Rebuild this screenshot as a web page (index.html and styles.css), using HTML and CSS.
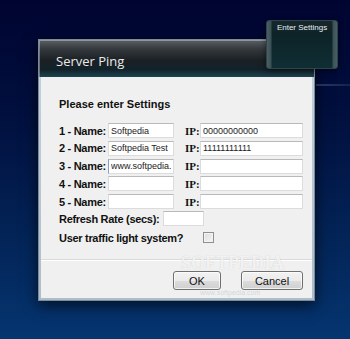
FILE: index.html
```html
<!DOCTYPE html>
<html lang="en">
<head>
  <meta charset="UTF-8">
  <title>Server Ping</title>
  <link rel="stylesheet" href="styles.css">
</head>
<body>

<div class="desk">
  <div class="dialog">
    <div class="titlebar">Server Ping</div>

    <div class="client">
      <form class="settings">
        <h1>Please enter Settings</h1>

        <div class="grid">
          <label>1 - Name:</label><input type="text" value="Softpedia"><label class="ip">IP:</label><input type="text" value="00000000000">
          <label>2 - Name:</label><input type="text" value="Softpedia Test"><label class="ip">IP:</label><input type="text" value="11111111111">
          <label>3 - Name:</label><input type="text" class="focus" value="www.softpedia.com"><label class="ip">IP:</label><input type="text">
          <label>4 - Name:</label><input type="text"><label class="ip">IP:</label><input type="text">
          <label>5 - Name:</label><input type="text"><label class="ip">IP:</label><input type="text">
        </div>

        <div class="line">
          <label class="rate-label">Refresh Rate (secs):</label>
          <input type="text" class="rate">
        </div>

        <div class="line check-line">
          <label class="check-label">User traffic light system?</label>
          <span class="check"></span>
        </div>
      </form>

      <div class="buttons">
        <button class="btn ok">OK</button>
        <button class="btn cancel">Cancel</button>
      </div>
    </div>
  </div>

  <!-- sidebar gadget sitting over the dialog corner -->
  <div class="gadget">Enter Settings</div>

  <div class="watermark">SOFTPEDIA</div>
  <div class="watermark-url">www.softpedia.com</div>
</div>

</body>
</html>
```

FILE: styles.css
```css
html, body {
  margin: 0;
  padding: 0;
}

body {
  width: 350px;
  height: 339px;
  overflow: hidden;
  font-family: 'Liberation Sans', Arial, sans-serif;
  background:
    linear-gradient(to right, rgba(120,150,200,.35), rgba(120,150,200,.15)) no-repeat 316px 84px / 34px 2px,
    linear-gradient(#000430 0%, #01103f 35%, #032457 70%, #053570 100%);
}

.desk {
  position: relative;
  height: 339px;
  box-sizing: border-box;
  padding: 39px 0 0 38px;
}

.dialog {
  width: 277px;
  box-sizing: border-box;
  border: 1px solid #7d8b98;
  background: linear-gradient(#c4d4de, #aebdca);
  box-shadow: 0 4px 14px rgba(0,0,0,.65);
}

.titlebar {
  height: 37px;
  box-sizing: border-box;
  padding: 13px 0 0 17px;
  color: #eaeaea;
  font-family: 'Open Sans', sans-serif;
  font-size: 13px;
  line-height: 16px;
  background: linear-gradient(#5b6065 0%, #33383c 25%, #1b2024 55%, #13222a 80%, #1d4452 100%);
  box-shadow: inset 1px 1px 0 rgba(255,255,255,.35);
}

.client {
  margin: 0 2px 2px;
  height: 221px;
  background: #f0f0f0;
  display: flex;
  flex-direction: column;
}

.settings {
  flex: 1;
  padding: 21px 0 0 18px;
}

h1 {
  margin: 0 0 12px;
  font-size: 11px;
  line-height: 13px;
  font-weight: bold;
  color: #111;
}

.grid {
  display: grid;
  grid-template-columns: 49px 66px 26px 103px;
  grid-auto-rows: 15px;
  row-gap: 2.75px;
  align-items: center;
}

label {
  font-size: 11px;
  font-weight: bold;
  letter-spacing: -0.3px;
  color: #111;
  white-space: nowrap;
}

.ip {
  padding-left: 11px;
  letter-spacing: 0;
  font-family: 'Liberation Serif', serif;
}

input[type=text] {
  height: 15px;
  box-sizing: border-box;
  margin: 0;
  padding: 0 2px;
  border: 1px solid #dcdcdc;
  border-top-color: #b9b9b9;
  background: #fff;
  font-family: 'Liberation Sans', sans-serif;
  font-size: 9px;
  color: #222;
  outline: none;
}

input.focus {
  border-left-color: #7da2ce;
}

.line {
  display: flex;
  align-items: center;
  height: 15px;
  margin-top: 2px;
}

.rate-label {
  width: 104px;
}

input.rate {
  width: 41px;
}

.check-line {
  margin-top: 4px;
}

.check-label {
  width: 144px;
}

.check {
  width: 11px;
  height: 11px;
  box-sizing: border-box;
  border: 1px solid #8e8f8f;
  background: linear-gradient(135deg, #dcdcdc, #f6f6f6);
  box-shadow: inset 0 0 0 1px #f4f4f4;
}

.buttons {
  height: 39px;
  box-sizing: border-box;
  padding: 11px 9px 0 0;
  border-top: 1px solid #dadada;
  box-shadow: inset 0 1px 0 #fff;
  display: flex;
  justify-content: flex-end;
  gap: 20px;
}

.btn {
  height: 19px;
  padding: 0;
  border: 1px solid #707070;
  border-radius: 3px;
  background: linear-gradient(#f2f2f2 0%, #ebebeb 50%, #dddddd 51%, #cfcfcf 100%);
  box-shadow: inset 0 0 0 1px rgba(255,255,255,.7);
  font-family: 'Liberation Sans', sans-serif;
  font-size: 11px;
  color: #111;
}

.ok {
  width: 48px;
}

.cancel {
  width: 62px;
}

.gadget {
  position: absolute;
  left: 266px;
  top: 20px;
  width: 72px;
  height: 49px;
  box-sizing: border-box;
  padding-top: 1px;
  border-radius: 3px;
  border: 1px solid #2f4448;
  color: #e6eef0;
  font-size: 8px;
  line-height: 11px;
  text-align: center;
  background:
    linear-gradient(to right, #4a5f63 0, #3a5055 4px, rgba(0,0,0,0) 5px, rgba(0,0,0,0) 65px, #3a5055 66px, #4a5f63 100%),
    linear-gradient(#17282c 0%, #0d2328 30%, #0f2e34 100%);
  box-shadow: 0 2px 6px rgba(0,0,0,.5);
}

/* faint screenshot watermark over the dialog */
.watermark {
  position: absolute;
  left: 181px;
  top: 257px;
  font-family: 'Liberation Serif', serif;
  font-weight: bold;
  font-size: 18px;
  line-height: 12px;
  height: 12px;
  overflow: visible;
  color: rgba(255,255,255,.8);
  text-shadow: 0 0 1px rgba(0,0,0,.2);
}

.watermark-url {
  position: absolute;
  left: 200px;
  top: 289px;
  font-size: 7px;
  line-height: 8px;
  color: rgba(170,180,190,.45);
}
```
